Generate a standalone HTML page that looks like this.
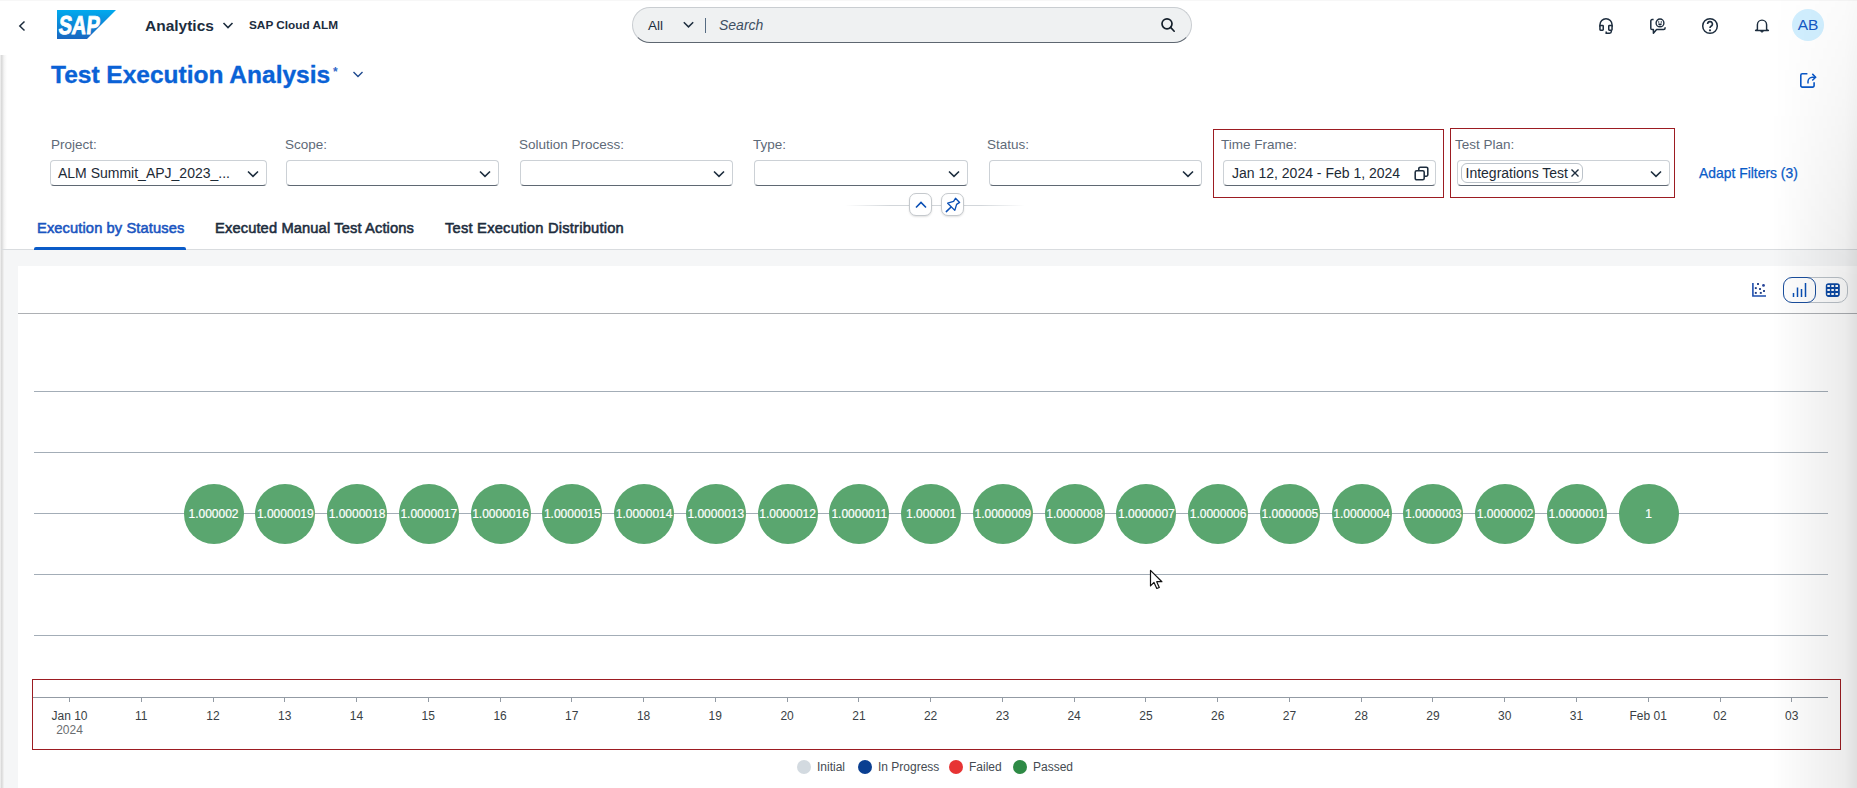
<!DOCTYPE html>
<html><head><meta charset="utf-8">
<style>
*{box-sizing:border-box;margin:0;padding:0}
html,body{width:1857px;height:788px;overflow:hidden;background:#fff;font-family:"Liberation Sans",sans-serif;color:#1d2d3e}
.a{position:absolute;white-space:nowrap}
.lbl{font-size:13.5px;color:#5e6a78;line-height:14px}
.inp{position:absolute;top:160px;height:26px;background:#fff;border:1px solid #ccd1d6;border-bottom:1px solid #5f6873;border-radius:4px;}
.inp svg{position:absolute;right:7.5px;top:9px}
.txt{font-size:14px;color:#1d2a36;line-height:16px}
.tab{font-size:14.7px;line-height:16px;-webkit-text-stroke:0.55px currentColor}
.bub{position:absolute;top:484px;width:60px;height:60px;border-radius:50%;background:#5aa66f;color:#fff;font-size:12px;line-height:61px;text-align:center;-webkit-text-stroke:0.2px #fff}
.tick{position:absolute;top:697px;width:1px;height:5px;background:#939ba4}
.xl{position:absolute;top:709px;font-size:12px;line-height:14px;color:#3a3f45;text-align:center;width:80px}
.lg{position:absolute;top:760px;width:14px;height:14px;border-radius:50%}
.lgt{position:absolute;top:760px;font-size:12px;line-height:14px;color:#454b52}
</style></head><body>
<div id="root" style="position:relative;width:1857px;height:788px;overflow:hidden">

<!-- shell bar -->
<div class="a" style="left:0;top:0;width:1857px;height:1px;background:#f7f7f7"></div>
<svg class="a" style="left:17px;top:19px" width="10" height="14" viewBox="0 0 10 14"><path d="M7.5 2.5 L2.8 7 L7.5 11.5" fill="none" stroke="#1d2d3e" stroke-width="1.5"/></svg>
<svg class="a" style="left:57px;top:10px" width="59" height="29" viewBox="0 0 59 29">
<defs><linearGradient id="sg" x1="0" y1="0" x2="0" y2="1"><stop offset="0" stop-color="#00aaee"/><stop offset="1" stop-color="#1a66c0"/></linearGradient></defs>
<path d="M0 0 H59 L30 29 H0 Z" fill="url(#sg)"/>
<text x="1.5" y="24" font-family="Liberation Sans" font-weight="bold" font-size="26" fill="#fff" stroke="#fff" stroke-width="0.9" textLength="41" lengthAdjust="spacingAndGlyphs" transform="skewX(-6) translate(2,0)">SAP</text>
</svg>
<div class="a" style="left:145px;top:18px;font-size:15.5px;font-weight:bold;line-height:16px;color:#1d2d3e">Analytics</div>
<svg class="a" style="left:222px;top:21px" width="12" height="9" viewBox="0 0 12 9"><path d="M1.5 2 L6 6.5 L10.5 2" fill="none" stroke="#1d2d3e" stroke-width="1.6"/></svg>
<div class="a" style="left:249px;top:19px;font-size:11.8px;font-weight:bold;line-height:12px;color:#1d2d3e">SAP Cloud ALM</div>

<!-- search -->
<div class="a" style="left:632px;top:7px;width:560px;height:36px;border-radius:18px;background:#eff1f2;border:1px solid #c9cdd1;border-bottom:1px solid #5d6670"></div>
<div class="a" style="left:648px;top:18.5px;font-size:13.5px;line-height:14px;color:#1d2d3e">All</div>
<svg class="a" style="left:682px;top:20px" width="13" height="9" viewBox="0 0 13 9"><path d="M1.8 2.2 L6.5 6.9 L11.2 2.2" fill="none" stroke="#1d2d3e" stroke-width="1.5"/></svg>
<div class="a" style="left:705px;top:18px;width:1px;height:15px;background:#556b82"></div>
<div class="a" style="left:719px;top:18px;font-size:14px;line-height:14px;font-style:italic;color:#3e4f62">Search</div>
<svg class="a" style="left:1159px;top:17px" width="17" height="17" viewBox="0 0 17 17"><circle cx="8" cy="6.8" r="5" fill="none" stroke="#131e29" stroke-width="1.7"/><path d="M11.6 10.4 L15.2 14.2" stroke="#131e29" stroke-width="1.6" stroke-linecap="round"/></svg>

<!-- right shell icons -->
<svg class="a" style="left:1597px;top:17px" width="18" height="18" viewBox="0 0 18 18"><path d="M2.95 10 V7.8 A6.05 6.05 0 0 1 15.05 7.8 V10" fill="none" stroke="#1d2d3e" stroke-width="1.5"/><rect x="2.95" y="8.55" width="3.3" height="4.6" rx="0.6" fill="#fff" stroke="#1d2d3e" stroke-width="1.5"/><rect x="11.75" y="8.55" width="3.3" height="4.6" rx="0.6" fill="#fff" stroke="#1d2d3e" stroke-width="1.5"/><path d="M14.3 13.2 V14.5 a1.7 1.7 0 0 1 -1.7 1.7 H9.2 V14.6" fill="none" stroke="#1d2d3e" stroke-width="1.5"/></svg>
<svg class="a" style="left:1649px;top:17px" width="18" height="18" viewBox="0 0 18 18"><path d="M4.6 2.6 H3.1 a1.3 1.3 0 0 0 -1.3 1.3 V11.3 a1.3 1.3 0 0 0 1.3 1.3 H4.4 V16.2 L7.6 12.6 H14.6 a1.5 1.5 0 0 0 1.5 -1.5 V10.2" fill="none" stroke="#1d2d3e" stroke-width="1.5" stroke-linejoin="round"/><circle cx="11" cy="5.9" r="3.9" fill="none" stroke="#1d2d3e" stroke-width="1.4"/><circle cx="9.7" cy="5" r="0.75" fill="#1d2d3e"/><circle cx="12.3" cy="5" r="0.75" fill="#1d2d3e"/><path d="M9.1 6.6 a1.9 1.9 0 0 0 3.8 0 Z" fill="#1d2d3e"/></svg>
<svg class="a" style="left:1701px;top:17px" width="18" height="18" viewBox="0 0 18 18"><circle cx="9" cy="9" r="7.3" fill="none" stroke="#1d2d3e" stroke-width="1.5"/><path d="M6.6 7 a2.4 2.4 0 1 1 3.4 2.2 c-0.8 0.4 -1 0.9 -1 1.8" fill="none" stroke="#1d2d3e" stroke-width="1.6"/><circle cx="9" cy="13.3" r="1.1" fill="#1d2d3e"/></svg>
<svg class="a" style="left:1754px;top:18px" width="16" height="16" viewBox="0 0 16 16"><path d="M3.4 11.6 V6.7 a4.6 4.6 0 0 1 9.2 0 V11.6 L14.4 12.4 H1.6 Z" fill="none" stroke="#1d2d3e" stroke-width="1.45" stroke-linejoin="round"/><path d="M6.3 12.8 L8 14.6 L9.7 12.8 Z" fill="#1d2d3e" stroke="#1d2d3e" stroke-width="0.6" stroke-linejoin="round"/></svg>
<div class="a" style="left:1792px;top:9px;width:32px;height:32px;border-radius:50%;background:#d1efff;color:#1358c4;font-size:15.5px;line-height:32px;text-align:center">AB</div>

<!-- left border -->
<div class="a" style="left:0;top:55px;width:7px;height:733px;background:linear-gradient(90deg,#fff 0,#d9d9d9 1px,#dcdcdc 2px,#f4f4f4 4px,#fff 7px)"></div>

<!-- title -->
<div class="a" style="left:51px;top:62px;font-size:24.5px;font-weight:bold;line-height:26px;color:#0a62d6;-webkit-text-stroke:0.35px #0a62d6">Test Execution Analysis</div>
<div class="a" style="left:333px;top:65.5px;font-size:12px;font-weight:bold;line-height:12px;color:#2f68c8">*</div>
<svg class="a" style="left:352px;top:70px" width="12" height="9" viewBox="0 0 12 9"><path d="M1.5 2 L6 6.5 L10.5 2" fill="none" stroke="#1f4a8f" stroke-width="1.4"/></svg>
<svg class="a" style="left:1799px;top:72px" width="19" height="17" viewBox="0 0 19 17"><path d="M8.4 1.8 H3.3 a1.5 1.5 0 0 0 -1.5 1.5 V13.6 a1.5 1.5 0 0 0 1.5 1.5 H13.6 a1.5 1.5 0 0 0 1.5 -1.5 V10.2" fill="none" stroke="#0a58c8" stroke-width="1.6"/><path d="M9 11.4 V9.6 a4.4 4.4 0 0 1 4.4 -4.4 H16.2" fill="none" stroke="#0a58c8" stroke-width="1.5"/><path d="M13.3 1.9 L16.6 5.2 L13.3 8.5" fill="none" stroke="#0a58c8" stroke-width="1.5"/></svg>

<!-- filters -->
<div class="a lbl" style="left:51px;top:138px">Project:</div>
<div class="a lbl" style="left:285px;top:138px">Scope:</div>
<div class="a lbl" style="left:519px;top:138px">Solution Process:</div>
<div class="a lbl" style="left:753px;top:138px">Type:</div>
<div class="a lbl" style="left:987px;top:138px">Status:</div>
<div class="a lbl" style="left:1221px;top:138px">Time Frame:</div>
<div class="a lbl" style="left:1455px;top:138px">Test Plan:</div>

<div class="inp" style="left:50px;width:217px"><div class="a txt" style="left:7px;top:4px">ALM Summit_APJ_2023_...</div><svg width="12" height="8" viewBox="0 0 12 8"><path d="M1 1.5 L6 6.3 L11 1.5" fill="none" stroke="#1d2d3e" stroke-width="1.6"/></svg></div>
<div class="inp" style="left:286px;width:213px"><svg width="12" height="8" viewBox="0 0 12 8"><path d="M1 1.5 L6 6.3 L11 1.5" fill="none" stroke="#1d2d3e" stroke-width="1.6"/></svg></div>
<div class="inp" style="left:520px;width:213px"><svg width="12" height="8" viewBox="0 0 12 8"><path d="M1 1.5 L6 6.3 L11 1.5" fill="none" stroke="#1d2d3e" stroke-width="1.6"/></svg></div>
<div class="inp" style="left:754px;width:214px"><svg width="12" height="8" viewBox="0 0 12 8"><path d="M1 1.5 L6 6.3 L11 1.5" fill="none" stroke="#1d2d3e" stroke-width="1.6"/></svg></div>
<div class="inp" style="left:989px;width:213px"><svg width="12" height="8" viewBox="0 0 12 8"><path d="M1 1.5 L6 6.3 L11 1.5" fill="none" stroke="#1d2d3e" stroke-width="1.6"/></svg></div>
<div class="inp" style="left:1223px;width:213px"><div class="a txt" style="left:8px;top:4px">Jan 12, 2024 - Feb 1, 2024</div>
<svg style="right:6.5px;top:5px" width="15" height="15" viewBox="0 0 15 15"><rect x="1.2" y="4.8" width="9" height="9" rx="1.5" fill="none" stroke="#1d2d3e" stroke-width="1.55"/><path d="M4.8 4.8 V2.7 a1.5 1.5 0 0 1 1.5 -1.5 H12.3 a1.5 1.5 0 0 1 1.5 1.5 V8.7 a1.5 1.5 0 0 1 -1.5 1.5 H10.2" fill="none" stroke="#1d2d3e" stroke-width="1.55"/></svg></div>
<div class="inp" style="left:1457px;width:213px">
<div class="a" style="left:3px;top:2px;width:122px;height:20px;border:1px solid #bcc3ca;border-radius:6px;background:#fff"></div>
<div class="a txt" style="left:7.5px;top:4px">Integrations Test</div>
<svg style="left:112px;top:7px;right:auto" width="10" height="10" viewBox="0 0 10 10"><path d="M1.5 1.5 L8.5 8.5 M8.5 1.5 L1.5 8.5" stroke="#1d2d3e" stroke-width="1.4"/></svg>
<svg width="12" height="8" viewBox="0 0 12 8"><path d="M1 1.5 L6 6.3 L11 1.5" fill="none" stroke="#1d2d3e" stroke-width="1.6"/></svg></div>

<div class="a" style="left:1213px;top:129px;width:231px;height:69px;border:1.5px solid #9c1c22"></div>
<div class="a" style="left:1450px;top:128px;width:225px;height:70px;border:1.5px solid #9c1c22"></div>

<div class="a" style="left:1699px;top:166px;font-size:13.9px;line-height:14px;color:#0a5bc8;-webkit-text-stroke:0.25px #0a5bc8">Adapt Filters (3)</div>

<!-- collapse line + buttons -->
<div class="a" style="left:845px;top:205px;width:180px;height:1px;background:linear-gradient(90deg,rgba(210,214,218,0),#d2d6da 25%,#d2d6da 75%,rgba(210,214,218,0))"></div>
<div class="a" style="left:909px;top:193px;width:23px;height:23px;border:1px solid #c5c9cd;border-radius:7px;background:#fff;box-shadow:0 1px 2px rgba(0,0,0,.12)"></div>
<svg class="a" style="left:915px;top:200px" width="12" height="9" viewBox="0 0 12 9"><path d="M1 7.5 L6 2.5 L11 7.5" fill="none" stroke="#0a4fb5" stroke-width="1.6"/></svg>
<div class="a" style="left:941px;top:193px;width:23px;height:23px;border:1px solid #c5c9cd;border-radius:7px;background:#fff;box-shadow:0 1px 2px rgba(0,0,0,.12)"></div>
<svg class="a" style="left:945px;top:197px" width="16" height="16" viewBox="0 0 16 16"><path d="M10.5 1.3 L14.6 5.4 L11.6 7.4 L9.8 13.4 L2.7 6.2 L8.6 4.4 Z" fill="none" stroke="#0a4fb5" stroke-width="1.35" stroke-linejoin="round"/><path d="M5.8 10.2 L1.3 14.6" stroke="#0a4fb5" stroke-width="1.5" stroke-linecap="round"/></svg>

<!-- tabs -->
<div class="a tab" style="left:37px;top:220px;color:#1a55c0;letter-spacing:0.1px">Execution by Statuses</div>
<div class="a tab" style="left:215px;top:220px;color:#1d2d3e;letter-spacing:0.12px">Executed Manual Test Actions</div>
<div class="a tab" style="left:445px;top:220px;color:#1d2d3e;letter-spacing:0.22px">Test Execution Distribution</div>
<div class="a" style="left:1px;top:249px;width:1856px;height:1px;background:#d9dcdf"></div>
<div class="a" style="left:34px;top:247px;width:152px;height:3px;background:#0a5bc8;border-radius:2px 2px 0 0"></div>

<!-- page bg -->
<div class="a" style="left:4px;top:250px;width:1853px;height:538px;background:#f5f6f7"></div>
<!-- card -->
<div class="a" style="left:18px;top:266px;width:1839px;height:522px;background:#fff"></div>
<div class="a" style="left:18px;top:313px;width:1839px;height:1px;background:#adb0b4"></div>

<!-- toolbar icons -->
<svg class="a" style="left:1751px;top:282px" width="16" height="16" viewBox="0 0 16 16"><path d="M1.9 1 V14 H15" fill="none" stroke="#1e4fae" stroke-width="1.6"/><rect x="6.05" y="1.05" width="1.9" height="1.9" fill="#1f3d85"/><rect x="3.8499999999999996" y="5.1499999999999995" width="1.9" height="1.9" fill="#1f3d85"/><rect x="8.05" y="6.05" width="1.9" height="1.9" fill="#1f3d85"/><rect x="12.05" y="8.05" width="1.9" height="1.9" fill="#1f3d85"/><rect x="3.8499999999999996" y="9.950000000000001" width="1.9" height="1.9" fill="#1f3d85"/><rect x="8.850000000000001" y="9.950000000000001" width="1.9" height="1.9" fill="#1f3d85"/><circle cx="12.5" cy="3.4" r="1.4" fill="#27459a"/></svg>
<div class="a" style="left:1783px;top:277px;width:65px;height:26px;border:1px solid #bcc3ca;border-radius:10px;background:#fff"></div>
<div class="a" style="left:1783px;top:277px;width:33px;height:26px;border:1px solid #1a4f9e;border-radius:9px;background:#fff"></div>
<svg class="a" style="left:1792px;top:283px" width="15" height="14" viewBox="0 0 15 14"><path d="M1.5 14 V10 M5.5 14 V4.5 M9.5 14 V6 M13.5 14 V0" stroke="#0a4fb5" stroke-width="1.5"/></svg>
<svg class="a" style="left:1825px;top:283px" width="15" height="14" viewBox="0 0 15 14"><rect x="0.8" y="0.2" width="14" height="13.7" rx="2.8" fill="#0c4aa6"/><g fill="#fff"><rect x="2.3" y="2.0" width="2.6" height="2" rx="0.3"/><rect x="6.3" y="2.0" width="2.6" height="2" rx="0.3"/><rect x="10.4" y="2.0" width="2.6" height="2" rx="0.3"/><rect x="2.3" y="5.9" width="2.6" height="2" rx="0.3"/><rect x="6.3" y="5.9" width="2.6" height="2" rx="0.3"/><rect x="10.4" y="5.9" width="2.6" height="2" rx="0.3"/><rect x="2.3" y="9.9" width="2.6" height="2" rx="0.3"/><rect x="6.3" y="9.9" width="2.6" height="2" rx="0.3"/><rect x="10.4" y="9.9" width="2.6" height="2" rx="0.3"/></g></svg>

<!-- grid -->
<div class="a" style="left:34px;top:391px;width:1794px;height:1px;background:#a3adb7"></div>
<div class="a" style="left:34px;top:452px;width:1794px;height:1px;background:#a3adb7"></div>
<div class="a" style="left:34px;top:513px;width:1794px;height:1px;background:#a3adb7"></div>
<div class="a" style="left:34px;top:574px;width:1794px;height:1px;background:#a3adb7"></div>
<div class="a" style="left:34px;top:635px;width:1794px;height:1px;background:#a3adb7"></div>
<div class="a" style="left:32px;top:697px;width:1796px;height:1px;background:#939ba4"></div>

<div class="bub" style="left:183.5px">1.000002</div>
<div class="bub" style="left:255.3px">1.0000019</div>
<div class="bub" style="left:327.0px">1.0000018</div>
<div class="bub" style="left:398.8px">1.0000017</div>
<div class="bub" style="left:470.5px">1.0000016</div>
<div class="bub" style="left:542.3px">1.0000015</div>
<div class="bub" style="left:614.1px">1.0000014</div>
<div class="bub" style="left:685.8px">1.0000013</div>
<div class="bub" style="left:757.6px">1.0000012</div>
<div class="bub" style="left:829.3px">1.0000011</div>
<div class="bub" style="left:901.1px">1.000001</div>
<div class="bub" style="left:972.9px">1.0000009</div>
<div class="bub" style="left:1044.6px">1.0000008</div>
<div class="bub" style="left:1116.4px">1.0000007</div>
<div class="bub" style="left:1188.1px">1.0000006</div>
<div class="bub" style="left:1259.9px">1.0000005</div>
<div class="bub" style="left:1331.7px">1.0000004</div>
<div class="bub" style="left:1403.4px">1.0000003</div>
<div class="bub" style="left:1475.2px">1.0000002</div>
<div class="bub" style="left:1546.9px">1.0000001</div>
<div class="bub" style="left:1618.7px">1</div>
<div class="tick" style="left:69.0px"></div><div class="xl" style="left:29.5px">Jan 10</div>
<div class="tick" style="left:140.8px"></div><div class="xl" style="left:101.3px">11</div>
<div class="tick" style="left:212.5px"></div><div class="xl" style="left:173.0px">12</div>
<div class="tick" style="left:284.3px"></div><div class="xl" style="left:244.8px">13</div>
<div class="tick" style="left:356.0px"></div><div class="xl" style="left:316.5px">14</div>
<div class="tick" style="left:427.8px"></div><div class="xl" style="left:388.3px">15</div>
<div class="tick" style="left:499.6px"></div><div class="xl" style="left:460.1px">16</div>
<div class="tick" style="left:571.3px"></div><div class="xl" style="left:531.8px">17</div>
<div class="tick" style="left:643.1px"></div><div class="xl" style="left:603.6px">18</div>
<div class="tick" style="left:714.8px"></div><div class="xl" style="left:675.3px">19</div>
<div class="tick" style="left:786.6px"></div><div class="xl" style="left:747.1px">20</div>
<div class="tick" style="left:858.4px"></div><div class="xl" style="left:818.9px">21</div>
<div class="tick" style="left:930.1px"></div><div class="xl" style="left:890.6px">22</div>
<div class="tick" style="left:1001.9px"></div><div class="xl" style="left:962.4px">23</div>
<div class="tick" style="left:1073.6px"></div><div class="xl" style="left:1034.1px">24</div>
<div class="tick" style="left:1145.4px"></div><div class="xl" style="left:1105.9px">25</div>
<div class="tick" style="left:1217.2px"></div><div class="xl" style="left:1177.7px">26</div>
<div class="tick" style="left:1288.9px"></div><div class="xl" style="left:1249.4px">27</div>
<div class="tick" style="left:1360.7px"></div><div class="xl" style="left:1321.2px">28</div>
<div class="tick" style="left:1432.4px"></div><div class="xl" style="left:1392.9px">29</div>
<div class="tick" style="left:1504.2px"></div><div class="xl" style="left:1464.7px">30</div>
<div class="tick" style="left:1576.0px"></div><div class="xl" style="left:1536.5px">31</div>
<div class="tick" style="left:1647.7px"></div><div class="xl" style="left:1608.2px">Feb 01</div>
<div class="tick" style="left:1719.5px"></div><div class="xl" style="left:1680.0px">02</div>
<div class="tick" style="left:1791.2px"></div><div class="xl" style="left:1751.7px">03</div>
<div class="xl" style="left:29.5px;top:723px;color:#6a6d70">2024</div>

<div class="a" style="left:32px;top:679px;width:1809px;height:71px;border:1.5px solid #9c1c22"></div>

<!-- legend -->
<div class="lg" style="left:797px;background:#d3dae0"></div><div class="lgt" style="left:817px">Initial</div>
<div class="lg" style="left:858px;background:#0a3f91"></div><div class="lgt" style="left:878px">In Progress</div>
<div class="lg" style="left:949px;background:#e73434"></div><div class="lgt" style="left:969px">Failed</div>
<div class="lg" style="left:1013px;background:#2e8a45"></div><div class="lgt" style="left:1033px">Passed</div>

<svg class="a" style="left:1149px;top:569px" width="14" height="21" viewBox="0 0 14 21"><path d="M1.5 1.4 V16.9 L5 13.4 L7.8 19.5 L10.3 18.5 L7.7 12.7 H12.9 Z" fill="#fff" stroke="#111" stroke-width="1.2" stroke-linejoin="round"/></svg>
<!-- right shadow -->
<div class="a" style="left:1772px;top:0;width:85px;height:788px;background:linear-gradient(90deg,rgba(0,0,0,0) 0,rgba(0,0,0,.03) 35%,rgba(0,0,0,.075) 85%,rgba(0,0,0,.12) 100%);-webkit-mask-image:linear-gradient(180deg,rgba(0,0,0,.2) 0,rgba(0,0,0,.45) 100px,#000 280px)"></div>
</div>
</body></html>
